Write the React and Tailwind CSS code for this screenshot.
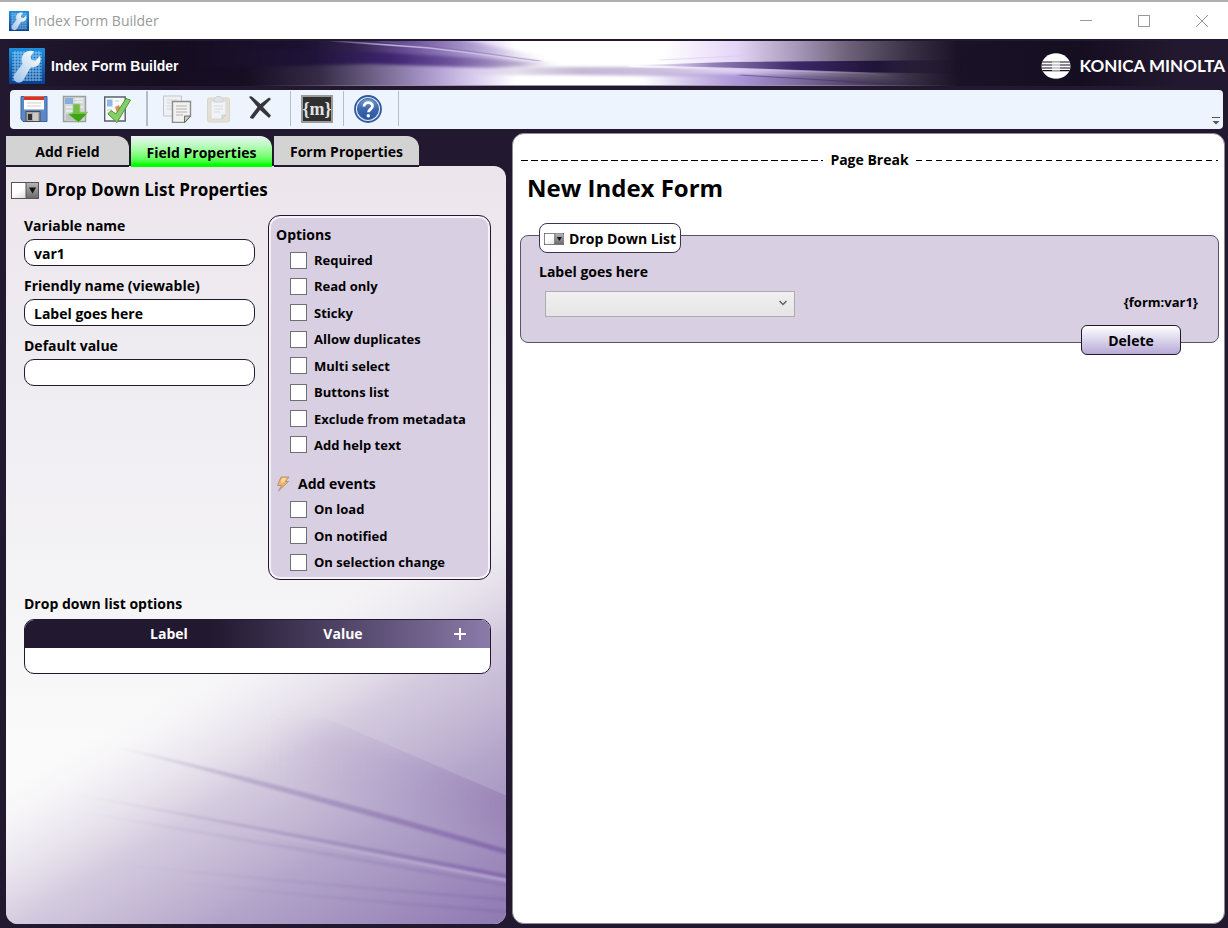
import { useState } from "react";

const OPTIONS = [
  "Required",
  "Read only",
  "Sticky",
  "Allow duplicates",
  "Multi select",
  "Buttons list",
  "Exclude from metadata",
  "Add help text",
];

const EVENTS = ["On load", "On notified", "On selection change"];

function WrenchLogo({ className }) {
  return (
    <svg viewBox="0 0 36 36" className={className} aria-hidden="true">
      <defs>
        <linearGradient id="logoBg" x1="0" y1="0" x2="0" y2="1">
          <stop offset="0" stopColor="#1f8fe0" />
          <stop offset="1" stopColor="#0a3f8c" />
        </linearGradient>
        <linearGradient id="logoWrench" x1="1" y1="0" x2="0" y2="1">
          <stop offset="0" stopColor="#ffffff" />
          <stop offset="0.5" stopColor="#d3e4f5" />
          <stop offset="1" stopColor="#9cc0e8" />
        </linearGradient>
      </defs>
      <rect width="36" height="36" rx="1" fill="url(#logoBg)" />
      <path
        d="M6 3v30M9 3v30M12 3v30M15 3v30M18 3v30M21 3v30M24 3v30M27 3v30M30 3v30M3 5h30M3 8h30M3 11h30M3 14h30M3 17h30M3 20h30M3 23h30M3 26h30M3 29h30M3 32h30"
        stroke="#a5dafc"
        strokeWidth="1"
        opacity="0.75"
      />
      <path
        d="M15.500 5c3-2.500 7-3 9.500-1.500l-3.500 5 1 3.500 4 .5 4.500-4.500c1.500 4 0 8-3 10-2.500 1.500-4.500 1.500-6.500 1.500L14 32.500c-2 2.500-5.500 2.700-8 .5-2.200-2-2-5 0-7.200L13.500 16c-1.500-4-1-8.500 2-11z"
        fill="url(#logoWrench)"
      />
    </svg>
  );
}

function Banner() {
  return (
    <svg
      viewBox="0 0 1228 45"
      preserveAspectRatio="none"
      className="absolute inset-0 h-full w-full"
      aria-hidden="true"
    >
      <defs>
        <linearGradient id="bannerBase" gradientUnits="userSpaceOnUse" x1="0" y1="0" x2="1228" y2="0">
          <stop offset="0" stopColor="#221930" />
          <stop offset="0.13" stopColor="#150d20" />
          <stop offset="0.2" stopColor="#170e24" />
          <stop offset="0.26" stopColor="#352b46" />
          <stop offset="0.3" stopColor="#685b80" />
          <stop offset="0.35" stopColor="#ab99cc" />
          <stop offset="0.385" stopColor="#d9cbef" />
          <stop offset="0.42" stopColor="#ffffff" />
          <stop offset="0.54" stopColor="#ffffff" />
          <stop offset="0.6" stopColor="#e4d5f7" />
          <stop offset="0.65" stopColor="#a596b8" />
          <stop offset="0.69" stopColor="#6d6279" />
          <stop offset="0.74" stopColor="#3a3147" />
          <stop offset="0.78" stopColor="#1a1226" />
          <stop offset="0.88" stopColor="#150d20" />
          <stop offset="0.96" stopColor="#221930" />
        </linearGradient>
        <linearGradient id="bannerTop" gradientUnits="userSpaceOnUse" x1="200" y1="0" x2="550" y2="0">
          <stop offset="0" stopColor="#170e24" />
          <stop offset="0.3" stopColor="#1b1130" />
          <stop offset="0.45" stopColor="#33234f" />
          <stop offset="0.6" stopColor="#6b529a" />
          <stop offset="0.78" stopColor="#a996cc" stopOpacity="0.9" />
          <stop offset="1" stopColor="#e0d6ee" stopOpacity="0" />
        </linearGradient>
        <linearGradient id="bannerLeft" gradientUnits="userSpaceOnUse" x1="200" y1="0" x2="570" y2="0">
          <stop offset="0" stopColor="#170e24" />
          <stop offset="0.3" stopColor="#1f1338" />
          <stop offset="0.52" stopColor="#3f2470" />
          <stop offset="0.68" stopColor="#6d539c" />
          <stop offset="0.86" stopColor="#b3a2cb" stopOpacity="0.9" />
          <stop offset="1" stopColor="#d5cce0" stopOpacity="0" />
        </linearGradient>
        <linearGradient id="bannerRight" gradientUnits="userSpaceOnUse" x1="630" y1="0" x2="960" y2="0">
          <stop offset="0" stopColor="#c9bbe0" stopOpacity="0" />
          <stop offset="0.25" stopColor="#9480b8" />
          <stop offset="0.5" stopColor="#3d2868" />
          <stop offset="0.75" stopColor="#1f1338" />
          <stop offset="1" stopColor="#150d20" stopOpacity="0" />
        </linearGradient>
        <linearGradient id="bannerHaze" gradientUnits="userSpaceOnUse" x1="460" y1="0" x2="760" y2="0">
          <stop offset="0" stopColor="#b8abcd" stopOpacity="0" />
          <stop offset="0.4" stopColor="#b8abcd" stopOpacity="0.85" />
          <stop offset="0.7" stopColor="#bfb0d8" stopOpacity="0.8" />
          <stop offset="1" stopColor="#b39ed6" stopOpacity="0" />
        </linearGradient>
        <linearGradient id="bannerLow" gradientUnits="userSpaceOnUse" x1="640" y1="0" x2="940" y2="0">
          <stop offset="0" stopColor="#a78fd6" stopOpacity="0" />
          <stop offset="0.35" stopColor="#a18ad0" stopOpacity="0.9" />
          <stop offset="0.7" stopColor="#4c3d66" stopOpacity="0.8" />
          <stop offset="1" stopColor="#150d20" stopOpacity="0" />
        </linearGradient>
        <linearGradient id="bannerEdge" gradientUnits="userSpaceOnUse" x1="250" y1="0" x2="960" y2="0">
          <stop offset="0" stopColor="#8c8498" stopOpacity="0" />
          <stop offset="0.3" stopColor="#9c95a6" />
          <stop offset="0.7" stopColor="#9c95a6" />
          <stop offset="1" stopColor="#8c8498" stopOpacity="0" />
        </linearGradient>
        <linearGradient id="streakLeft" gradientUnits="userSpaceOnUse" x1="320" y1="0" x2="550" y2="0">
          <stop offset="0" stopColor="#b9a8dc" stopOpacity="0" />
          <stop offset="0.3" stopColor="#c3b3e2" />
          <stop offset="1" stopColor="#efe8f8" stopOpacity="0.4" />
        </linearGradient>
        <linearGradient id="streakRight" gradientUnits="userSpaceOnUse" x1="630" y1="0" x2="900" y2="0">
          <stop offset="0" stopColor="#ffffff" />
          <stop offset="0.5" stopColor="#cfbcf0" />
          <stop offset="1" stopColor="#8a7da0" stopOpacity="0" />
        </linearGradient>
        <filter id="bannerSoft" filterUnits="userSpaceOnUse" colorInterpolationFilters="sRGB" x="100" y="-20" width="1000" height="90">
          <feGaussianBlur stdDeviation="6 1.8" />
        </filter>
        <filter id="bannerFine" filterUnits="userSpaceOnUse" colorInterpolationFilters="sRGB" x="100" y="-20" width="1000" height="90">
          <feGaussianBlur stdDeviation="2 0.5" />
        </filter>
      </defs>
      <rect width="1228" height="45" fill="url(#bannerBase)" />
      <g filter="url(#bannerSoft)">
        <path d="M200-8h210l60 8 90 20-150 2-210-4z" fill="url(#bannerTop)" />
        <path d="M200 6l170 5 110 6 80 6-70 4-120-4-170 4z" fill="url(#bannerLeft)" />
        <path d="M450 24l100 2h120l100 5-20 5-180-2-110 0z" fill="url(#bannerHaze)" />
        <path d="M640 32l170 2 140 9v8H650z" fill="url(#bannerLow)" />
      </g>
      <path d="M640 24l90-3 240-2v14l-120-2-210-6z" fill="url(#bannerRight)" filter="url(#bannerFine)" />
      <g fill="none" filter="url(#bannerFine)">
        <path d="M320-1l110 8 115 14" stroke="url(#streakLeft)" strokeWidth="1.600" />
        <path d="M380 0l80 9 80 11" stroke="#7c68a0" strokeWidth="1" opacity="0.6" />
        <path d="M630 25l110 3 120 4 60 5" stroke="url(#streakRight)" strokeWidth="1.800" />
        <path d="M740 34l100 6 60 4" stroke="#3b2a60" strokeWidth="1.200" opacity="0.5" />
        <path d="M660 19l80-4" stroke="#d6c6ee" strokeWidth="1" opacity="0.6" />
      </g>
      <path d="M250 44.500h710" stroke="url(#bannerEdge)" />
    </svg>
  );
}

function PanelArt() {
  return (
    <svg
      viewBox="0 0 500 758"
      preserveAspectRatio="none"
      className="absolute inset-0 h-full w-full"
      aria-hidden="true"
    >
      <defs>
        <linearGradient id="panelBase" x1="0" y1="0" x2="0" y2="1">
          <stop offset="0" stopColor="#ece6ec" />
          <stop offset="0.3" stopColor="#efedf2" />
          <stop offset="0.55" stopColor="#f4f3f5" />
          <stop offset="0.75" stopColor="#fafafa" />
        </linearGradient>
        <linearGradient id="panelGlow" gradientUnits="userSpaceOnUse" x1="275" y1="458" x2="466" y2="777">
          <stop offset="0" stopColor="#f1edf4" stopOpacity="0" />
          <stop offset="0.15" stopColor="#e3dce9" stopOpacity="0.5" />
          <stop offset="0.32" stopColor="#cec3da" stopOpacity="0.85" />
          <stop offset="0.6" stopColor="#b3a5ca" />
          <stop offset="1" stopColor="#8f79b2" />
        </linearGradient>
        <linearGradient id="panelLobe" gradientUnits="userSpaceOnUse" x1="270" y1="0" x2="500" y2="0">
          <stop offset="0" stopColor="#b5a6cb" stopOpacity="0" />
          <stop offset="0.5" stopColor="#b0a1c9" stopOpacity="0.6" />
          <stop offset="1" stopColor="#9a84b6" />
        </linearGradient>
        <linearGradient id="panelStreak" gradientUnits="userSpaceOnUse" x1="60" y1="0" x2="500" y2="0">
          <stop offset="0" stopColor="#b3a8c4" stopOpacity="0" />
          <stop offset="0.4" stopColor="#a394bd" stopOpacity="0.5" />
          <stop offset="1" stopColor="#8468ab" />
        </linearGradient>
        <linearGradient id="panelShine" gradientUnits="userSpaceOnUse" x1="200" y1="0" x2="500" y2="0">
          <stop offset="0" stopColor="#e4dcec" stopOpacity="0" />
          <stop offset="1" stopColor="#c4b6dc" stopOpacity="0.8" />
        </linearGradient>
        <filter id="panelBlur" filterUnits="userSpaceOnUse" colorInterpolationFilters="sRGB" x="100" y="450" width="500" height="330">
          <feGaussianBlur stdDeviation="12" />
        </filter>
        <filter id="panelFine" filterUnits="userSpaceOnUse" colorInterpolationFilters="sRGB" x="-20" y="500" width="560" height="280">
          <feGaussianBlur stdDeviation="1" />
        </filter>
        <clipPath id="panelEdge">
          <path d="M180 496l140 56 200 86v80H180z" />
        </clipPath>
      </defs>
      <rect width="500" height="758" fill="url(#panelBase)" />
      <rect width="500" height="758" fill="url(#panelGlow)" />
      <g clipPath="url(#panelEdge)">
        <path d="M230 560l110 4 210 66v50q-130-20-320-80z" fill="url(#panelLobe)" filter="url(#panelBlur)" />
      </g>
      <g fill="url(#panelStreak)" filter="url(#panelFine)">
        <path d="M110 581q150 31 400 105v5q-240-68-400-110z" />
        <path d="M50 625q210 36 460 85v4q-250-49-460-89z" />
        <path d="M50 642q210 32 460 78v2q-250-42-460-80z" opacity="0.5" />
        <path d="M110 698q190 18 400 35v3q-220-17-400-38z" opacity="0.5" />
        <path d="M170 716q170 16 340 29v3q-200-15-340-32z" opacity="0.5" />
      </g>
      <path d="M200 657l310 59" stroke="url(#panelShine)" strokeWidth="2" filter="url(#panelFine)" />
    </svg>
  );
}

function DropDownIcon({ className }) {
  return (
    <svg viewBox="0 0 28 17" className={className} preserveAspectRatio="none" aria-hidden="true">
      <defs>
        <linearGradient id="ddLeft" x1="0" y1="0" x2="1" y2="1">
          <stop offset="0.4" stopColor="#ffffff" />
          <stop offset="1" stopColor="#c4c4c4" />
        </linearGradient>
        <linearGradient id="ddRight" x1="0" y1="0" x2="0" y2="1">
          <stop offset="0" stopColor="#b5b5b5" />
          <stop offset="1" stopColor="#6a6a6a" />
        </linearGradient>
      </defs>
      <rect x="0.500" y="0.500" width="27" height="16" fill="url(#ddLeft)" stroke="#555555" />
      <path d="M15 1h12v15H15z" fill="url(#ddRight)" />
      <path d="M15 1v15" stroke="#555555" />
      <path d="M18 5.500h7l-3.500 6z" fill="#111111" />
    </svg>
  );
}

function SaveIcon() {
  return (
    <svg viewBox="0 0 28 28" className="h-7 w-7" aria-hidden="true">
      <path d="M1 1.500h26v25H3L1 24z" fill="#5b88c8" stroke="#3c64a0" />
      <path d="M4 1.500h20v13H4z" fill="#ffffff" />
      <path d="M4 1.500h20v3.500H4z" fill="#e0311c" />
      <path d="M7 8h14M7 11h14" stroke="#cfcfcf" />
      <path d="M6 16.500h14v10H6z" fill="#a9a9a9" stroke="#4a4a4a" />
      <path d="M8 19h4v6H8z" fill="#2f2f2f" />
      <path d="M13 18h5v8h-5z" fill="#c9c9c9" />
    </svg>
  );
}

function ImportIcon() {
  return (
    <svg viewBox="0 0 28 28" className="h-7 w-7" aria-hidden="true">
      <path d="M1.500 1.500h22v25h-22z" fill="#d5d8d9" stroke="#9b9fa1" strokeWidth="1.500" />
      <path d="M3 3h8v6H3z" fill="#84aee0" />
      <path d="M13 4h8M13 7h8M4 12h17M4 16h8" stroke="#eeeeee" strokeWidth="1.500" />
      <path d="M4 19h9v6H4z" fill="#bfc2c3" />
      <path d="M11 9h7v8h8L16.500 27.500 6 19l5-1.500z" fill="#72bd48" stroke="#a3d18a" strokeWidth="0.800" />
      <path d="M14 19h10.500l-8 8L7 19.500z" fill="#3fa414" />
    </svg>
  );
}

function ValidateIcon() {
  return (
    <svg viewBox="0 0 28 28" className="h-7 w-7" aria-hidden="true">
      <path d="M.7 2h20.500v24H.7z" fill="#f8f9fa" stroke="#55606a" strokeWidth="1.400" />
      <path d="M3 4.500h5.500v7H3z" fill="#8db8e8" />
      <path d="M11 6h4M3 15h5M3 18h5" stroke="#c8cdd2" />
      <path d="M11 12l4-2 2 5-4 3z" fill="#e88a4a" />
      <path d="M22 3.500l4.500 1.500L13 27.500 4 19l3-3.500 5 3.500z" fill="#85cf68" stroke="#4a9a35" strokeWidth="1" />
    </svg>
  );
}

function CopyIcon() {
  return (
    <svg viewBox="0 0 30 28" className="h-7 w-[30px]" aria-hidden="true">
      <path d="M1.500 1h18v20h-18z" fill="#eef1f3" stroke="#c3c6c8" />
      <path d="M5 5h10M5 8h10M5 11h8M5 14h8" stroke="#d3d6d8" />
      <path d="M10.500 6.500h18V21l-6 6.500h-12z" fill="#f1f2f0" stroke="#8c8c8a" strokeWidth="1.400" />
      <path d="M14 11h11M14 14h11M14 17h11M14 20h7" stroke="#b2b2b0" />
      <path d="M22.500 27.500V21h6z" fill="#c8c8c6" stroke="#6e6e6c" />
    </svg>
  );
}

function PasteIcon() {
  return (
    <svg viewBox="0 0 26 28" className="h-7 w-[26px]" aria-hidden="true">
      <rect x="1.500" y="3" width="22" height="24" rx="2" fill="#e6dfd2" stroke="#d9d4c8" />
      <path d="M5 6h15v14l-4 4H5z" fill="#f0f4f9" stroke="#d5d8dc" />
      <path d="M8 4c0-1 2-1 2.500-2.500h4C15 3 17 3 17 4v3H8z" fill="#dfe3e6" stroke="#cfd2d5" />
      <path d="M8 11h9M8 14h9M8 17h6" stroke="#d7dade" />
      <path d="M16 24v-4h4z" fill="#dcdfe2" stroke="#cacdd0" />
    </svg>
  );
}

function CrossIcon() {
  return (
    <svg viewBox="0 0 28 28" className="h-7 w-7" aria-hidden="true">
      <path d="M3 2C4.500.5 6 1.500 7 2.500l7.500 6.500L23 2.500 25 4 17 12l8 8.500-2 2.500-9-8-6.500 8.500c-2 .5-3.500 0-3.500-1.500L11.500 12z" fill="#34363b" />
    </svg>
  );
}

function MacroIcon() {
  return (
    <span className="flex h-7 w-8 items-center justify-center border-2 border-[#9a9a9a] bg-[#303030] font-['Liberation_Serif',serif] text-lg leading-none text-[#e2e2e2]">
      {"{m}"}
    </span>
  );
}

function HelpIcon() {
  return (
    <svg viewBox="0 0 28 28" className="h-7 w-7" aria-hidden="true">
      <defs>
        <linearGradient id="helpFill" x1="0" y1="0" x2="0" y2="1">
          <stop offset="0" stopColor="#7d9fd0" />
          <stop offset="0.5" stopColor="#3c67ac" />
          <stop offset="1" stopColor="#2a559e" />
        </linearGradient>
      </defs>
      <circle cx="14" cy="14" r="13" fill="#dbe7f6" stroke="#2f5a9f" strokeWidth="1.800" />
      <circle cx="14" cy="14" r="10.500" fill="url(#helpFill)" stroke="#3a64a8" />
      <path d="M10 11.500c0-5 8.500-5 8.500-.5 0 3-4 3.200-4 6.300" fill="none" stroke="#ffffff" strokeWidth="2.800" />
      <circle cx="14.300" cy="20.700" r="1.700" fill="#ffffff" />
    </svg>
  );
}

function BoltIcon() {
  return (
    <svg viewBox="0 0 14 16" className="h-4 w-3.5" aria-hidden="true">
      <path d="M5 1h8L9.500 5.500h3L2.500 15l3-5.500h-4z" fill="#f2b266" stroke="#a98a76" strokeWidth="0.800" />
      <path d="M6.500 2h4L7.500 6.500H4.500z" fill="#f9dca0" />
    </svg>
  );
}

function KonicaLogo() {
  return (
    <div className="flex items-center gap-2">
      <svg viewBox="0 0 30 26" className="h-[26px] w-[30px]" aria-hidden="true">
        <defs>
          <clipPath id="globe">
            <ellipse cx="15" cy="13" rx="14.500" ry="12.700" />
          </clipPath>
        </defs>
        <g clipPath="url(#globe)">
          <rect width="30" height="26" fill="#ffffff" />
          <path d="M0 9h30M0 12h30M0 15h30M0 17.700h30" stroke="#150d20" strokeWidth="1.200" />
          <path d="M11 8.500h8v9.500h-8z" fill="#ffffff" opacity="0.6" />
        </g>
      </svg>
      <span className="font-['Lato',sans-serif] text-[17px] leading-6 font-bold whitespace-nowrap text-white">KONICA MINOLTA</span>
    </div>
  );
}

function ToolButton({ label, children }) {
  return (
    <button type="button" aria-label={label} className="flex items-center justify-center">
      {children}
    </button>
  );
}

function Tab({ active, onClick, children, className }) {
  const state = active
    ? "bg-gradient-to-b from-[#e9f3f4] to-[#00ff00] to-90%"
    : "border-b-2 border-[#221930] bg-[#d3d3d3]";
  return (
    <button
      type="button"
      role="tab"
      aria-selected={active}
      onClick={onClick}
      className={`h-[31px] rounded-tr-xl pt-0.5 text-sm leading-5 font-bold ${state} ${className}`}
    >
      {children}
    </button>
  );
}

function TextField({ id, label, defaultValue }) {
  return (
    <div className="flex flex-col gap-1">
      <label htmlFor={id} className="text-sm leading-[18px]">{label}</label>
      <input
        id={id}
        type="text"
        defaultValue={defaultValue}
        className="h-[27px] w-full rounded-[10px] border border-[#221930] bg-white px-[9px] pt-0.5 text-sm outline-none"
      />
    </div>
  );
}

function CheckRow({ label }) {
  return (
    <label className="flex h-[18px] items-center gap-[7px] text-[13px] leading-4">
      <input type="checkbox" className="h-[17px] w-[17px] appearance-none border border-[#707070] bg-white checked:bg-[#221930]" />
      {label}
    </label>
  );
}

export default function App() {
  const [tab, setTab] = useState("field");

  return (
    <div className="flex min-h-screen flex-col bg-[#221930] font-['Open_Sans','Noto_Sans',sans-serif] font-bold text-black">
      <div className="flex h-[39px] items-center border-t-2 border-[#b0b0b0] bg-white pr-5 pl-[9px]">
        <WrenchLogo className="h-5 w-5" />
        <span className="ml-[5px] text-sm font-normal text-[#999999]">Index Form Builder</span>
        <div className="ml-auto flex items-center gap-[46px]">
          <button type="button" aria-label="Minimize" className="h-px w-3 bg-[#999999]" />
          <button type="button" aria-label="Maximize" className="h-3 w-3 border border-[#999999]" />
          <button type="button" aria-label="Close">
            <svg viewBox="0 0 12 12" className="h-3 w-3" aria-hidden="true">
              <path d="M0 0l12 12M12 0L0 12" stroke="#999999" />
            </svg>
          </button>
        </div>
      </div>

      <header className="relative mt-0.5 mb-1 flex h-[45px] items-center justify-between">
        <Banner />
        <div className="relative flex items-center gap-1.5 pt-1 pl-[9px]">
          <WrenchLogo className="h-9 w-9" />
          <span className="font-['Liberation_Sans',sans-serif] text-sm text-white">Index Form Builder</span>
        </div>
        <div className="relative pt-1 pr-[3px]">
          <KonicaLogo />
        </div>
      </header>

      <div className="mr-[5px] ml-2.5 flex h-[39px] items-center rounded bg-[#edf4fd] pb-0.5 pl-2.5">
        <div className="flex items-center gap-3.5">
          <ToolButton label="Save"><SaveIcon /></ToolButton>
          <ToolButton label="Import"><ImportIcon /></ToolButton>
          <ToolButton label="Validate"><ValidateIcon /></ToolButton>
          <div className="h-[35px] w-0.5 bg-[#b4bcc6]" />
          <ToolButton label="Copy"><CopyIcon /></ToolButton>
          <ToolButton label="Paste"><PasteIcon /></ToolButton>
          <ToolButton label="Remove"><CrossIcon /></ToolButton>
        </div>
        <div className="ml-4 flex items-center gap-2.5">
          <div className="h-[35px] w-px bg-[#b4bcc6]" />
          <ToolButton label="Variables"><MacroIcon /></ToolButton>
          <div className="h-[35px] w-px bg-[#b4bcc6]" />
          <ToolButton label="Help"><HelpIcon /></ToolButton>
          <div className="ml-1.5 h-[35px] w-px bg-[#b4bcc6]" />
        </div>
        <button type="button" aria-label="More" className="mr-[3px] mb-0.5 ml-auto self-end">
          <svg viewBox="0 0 8 8" className="h-2 w-2" aria-hidden="true">
            <path d="M0 .500h8" stroke="#555555" />
            <path d="M.5 4h7L4 7.500z" fill="#555555" />
          </svg>
        </button>
      </div>

      <main className="flex flex-1 gap-1.5 pt-1 pr-[3px] pb-1 pl-1.5">
        <section className="flex w-[500px] shrink-0 flex-col pt-[3px]">
          <div role="tablist" className="relative z-10 -mb-px flex gap-0.5">
            <Tab active={tab === "add"} onClick={() => setTab("add")} className="w-[123px]">Add Field</Tab>
            <Tab active={tab === "field"} onClick={() => setTab("field")} className="w-[141px]">Field Properties</Tab>
            <Tab active={tab === "form"} onClick={() => setTab("form")} className="w-[145px]">Form Properties</Tab>
          </div>

          <div className="relative flex-1 overflow-hidden rounded-b-xl rounded-tr-xl">
            <PanelArt />
            <div className="relative pt-3 pr-[15px] pl-[18px]">
              <h2 className="-ml-[13px] flex h-6 items-center gap-1.5 text-[17px] leading-6 font-bold">
                <DropDownIcon className="h-[17px] w-7" />
                Drop Down List Properties
              </h2>

              <div className="mt-[13px] flex items-start gap-[13px]">
                <div className="flex flex-1 flex-col gap-[11px] pt-0.5">
                  <TextField id="variable-name" label="Variable name" defaultValue="var1" />
                  <TextField id="friendly-name" label="Friendly name (viewable)" defaultValue="Label goes here" />
                  <TextField id="default-value" label="Default value" defaultValue="" />
                </div>

                <div className="w-[223px] rounded-xl border border-[#221930] bg-[#d8cfe2] px-[7px] pt-[9px] pb-2 shadow-[inset_0_0_0_2px_#f6f2f8]">
                  <h3 className="text-sm leading-5">Options</h3>
                  <div className="mt-1.5 flex h-[203px] flex-col justify-between pl-3.5">
                    {OPTIONS.map((name) => (
                      <CheckRow key={name} label={name} />
                    ))}
                  </div>
                  <h3 className="mt-5 flex items-center gap-2 text-sm leading-5">
                    <BoltIcon />
                    Add events
                  </h3>
                  <div className="mt-1.5 flex h-[71px] flex-col justify-between pl-3.5">
                    {EVENTS.map((name) => (
                      <CheckRow key={name} label={name} />
                    ))}
                  </div>
                </div>
              </div>

              <h3 className="mt-3.5 text-sm leading-5">Drop down list options</h3>
              <div className="mt-[5px] overflow-hidden rounded-[10px] border border-[#221930] bg-white">
                <table className="w-full table-fixed text-sm leading-5">
                  <thead className="bg-gradient-to-r from-[#221930] from-40% to-[#8b7bab] text-white">
                    <tr className="h-7">
                      <td className="w-[57px]" />
                      <th scope="col">Label</th>
                      <th scope="col">Value</th>
                      <th className="w-[60px]">
                        <button type="button" aria-label="Add option" className="block w-full">
                          <svg viewBox="0 0 12 12" className="mx-auto h-3 w-3" aria-hidden="true">
                            <path d="M6 0v12M0 6h12" stroke="#ffffff" strokeWidth="2" />
                          </svg>
                        </button>
                      </th>
                    </tr>
                  </thead>
                  <tbody>
                    <tr className="h-[25px]">
                      <td colSpan={4} />
                    </tr>
                  </tbody>
                </table>
              </div>
            </div>
          </div>
        </section>

        <section className="flex-1 rounded-xl border border-[#8f8a98] bg-white pt-4 pr-[5px] pl-[7px]">
          <div className="flex items-center gap-[7px] px-px text-sm leading-5">
            <div className="h-px flex-1 bg-[repeating-linear-gradient(90deg,#000_0_7px,transparent_7px_10px)]" />
            Page Break
            <div className="h-px flex-1 bg-[repeating-linear-gradient(90deg,#000_0_6px,transparent_6px_10px)]" />
          </div>
          <h1 className="mt-0.5 pl-[7px] text-2xl leading-8">New Index Form</h1>

          <div className="relative mt-[31px] h-[108px] rounded-lg border border-[#5a5368] bg-[#d8cfe2] pr-5 pl-[18px]">
            <div className="absolute -top-[13px] left-[18px] flex h-[30px] items-center gap-[5px] rounded-lg border border-[#3c3350] bg-white px-1 pt-px text-sm">
              <DropDownIcon className="h-3 w-5" />
              Drop Down List
            </div>
            <label htmlFor="preview" className="block pt-[26px] text-sm leading-5">Label goes here</label>
            <div className="flex items-start justify-between pt-[9px] pl-1.5">
              <div className="relative">
                <select
                  id="preview"
                  className="block h-[26px] w-[250px] appearance-none border border-[#acacac] bg-gradient-to-b from-[#f0f0f0] to-[#e5e5e5]"
                />
                <svg viewBox="0 0 8 6" className="pointer-events-none absolute top-[9px] right-2 h-1.5 w-2" aria-hidden="true">
                  <path d="M.5 1L4 4.500 7.500 1" fill="none" stroke="#606060" strokeWidth="1.500" />
                </svg>
              </div>
              <span className="pt-px text-[13px] leading-5">{"{form:var1}"}</span>
            </div>
            <button
              type="button"
              className="absolute right-[37px] -bottom-[13px] h-[30px] w-[100px] rounded-md border border-[#221930] bg-gradient-to-b from-white to-[#b8aad6] pt-0.5 text-sm"
            >
              Delete
            </button>
          </div>
        </section>
      </main>
    </div>
  );
}
